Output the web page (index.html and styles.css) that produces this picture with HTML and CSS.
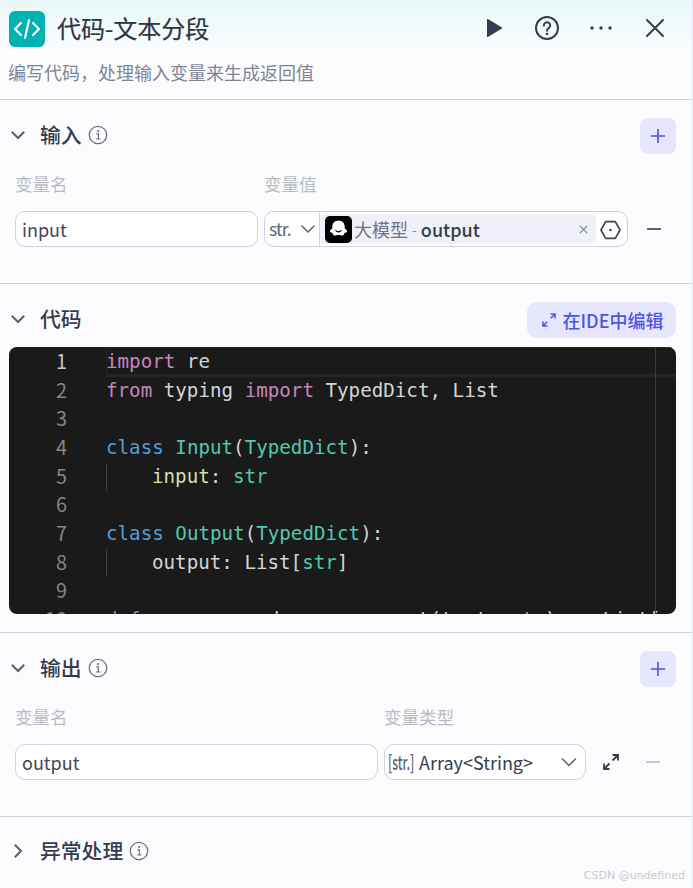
FILE: index.html
```html
<!DOCTYPE html>
<html lang="zh-CN">
<head>
<meta charset="utf-8">
<title>代码-文本分段</title>
<link rel="stylesheet" href="styles.css">
</head>
<body>
<div class="panel">
  <header class="top">
    <div class="top-row">
      <span class="logo">
        <svg viewBox="0 0 36 36" width="36" height="36"><path d="M12 12l-6 6 6 6M24 12l6 6-6 6M20 9l-4 18" fill="none" stroke="#fff" stroke-width="2.2" stroke-linecap="round" stroke-linejoin="round"/></svg>
      </span>
      <h1 class="title">代码-文本分段</h1>
      <div class="top-actions">
        <svg class="top-icon" viewBox="0 0 24 24"><path d="M6 3.5v17a.5.5 0 0 0 .8.4L21 12.400a.5.5 0 0 0 0-.8L6.800 3.100a.5.5 0 0 0-.8.4z" fill="#363c4f"/></svg>
        <svg class="top-icon" viewBox="0 0 24 24"><circle cx="12" cy="12" r="11" fill="none" stroke="#363c4f" stroke-width="2"/><path d="M8.800 9.500a3.200 3.200 0 1 1 4.900 2.700c-1.100.7-1.700 1.300-1.700 2.600" fill="none" stroke="#363c4f" stroke-width="2" stroke-linecap="round"/><circle cx="12" cy="18" r="1.300" fill="#363c4f"/></svg>
        <svg class="top-icon" viewBox="0 0 24 24"><circle cx="3" cy="12" r="1.700" fill="#363c4f"/><circle cx="12" cy="12" r="1.700" fill="#363c4f"/><circle cx="21" cy="12" r="1.700" fill="#363c4f"/></svg>
        <svg class="top-icon" viewBox="0 0 24 24"><path d="M4 4l16 16M20 4L4 20" fill="none" stroke="#363c4f" stroke-width="2" stroke-linecap="round"/></svg>
      </div>
    </div>
    <p class="desc">编写代码，处理输入变量来生成返回值</p>
  </header>

  <section class="section">
    <div class="head">
      <svg class="chev" viewBox="0 0 16 16"><path d="M1.800 4.800L8 11l6.200-6.200" fill="none" stroke="#5a6074" stroke-width="2"/></svg>
      <h2 class="sec-title">输入</h2>
      <svg class="info" viewBox="0 0 20 20"><circle cx="10" cy="10" r="8.700" fill="none" stroke="#6b7085" stroke-width="1.300"/><path d="M8.300 8.800h2.100v5M8 14h4.500" fill="none" stroke="#6b7085" stroke-width="1.200"/><circle cx="10" cy="6" r="1.100" fill="#6b7085"/></svg>
      <button class="add"><svg viewBox="0 0 20 20" width="20" height="20"><path d="M10 3v14M3 10h14" fill="none" stroke="#4d53e8" stroke-width="1.600"/></svg></button>
    </div>
    <div class="grid grid-in labels">
      <span class="label">变量名</span>
      <span class="label">变量值</span>
    </div>
    <div class="grid grid-in controls">
      <div class="field">input</div>
      <div class="field value">
        <div class="type">str.<svg class="chev-sm" viewBox="0 0 16 16"><path d="M1.500 4.500L8 11l6.500-6.500" fill="none" stroke="#5d6275" stroke-width="1.500"/></svg></div>
        <div class="chip">
          <svg class="ghost" viewBox="0 0 27 27"><rect width="27" height="27" rx="5" fill="#000"/><path d="M13.500 4.500c-3.900 0-6.200 2.800-6.200 6.200v1.700c-1.200.6-2.300 1.700-2.300 3.100 0 1.300 1.200 1.300 2.100 1 .8 1.900 1.500 3.100 2.800 3.100 1 0 1.400-.5 3.600-.5s2.600.5 3.600.5c1.300 0 2-1.200 2.800-3.100.9.3 2.100.3 2.100-1 0-1.400-1.100-2.500-2.300-3.100v-1.700c0-3.400-2.300-6.200-6.200-6.200z" fill="#fff"/><path d="M10.800 14.500c1.200 1.800 4.200 1.800 5.400 0" fill="none" stroke="#000" stroke-width="1.100" stroke-linecap="round"/></svg>
          <span class="chip-node">大模型</span><span class="chip-sep">-</span><span class="chip-var">output</span>
          <svg class="chip-x" viewBox="0 0 12 12"><path d="M2 2l8 8M10 2l-8 8" fill="none" stroke="#80859a" stroke-width="1.400"/></svg>
        </div>
        <svg class="hex" viewBox="0 0 22 20"><path d="M6 1.200h10l5 8.800-5 8.800H6L1 10z" fill="none" stroke="#3f4558" stroke-width="1.700" stroke-linejoin="round"/><circle cx="11" cy="10" r="1.400" fill="#3f4558"/></svg>
      </div>
      <svg class="minus" viewBox="0 0 16 16"><path d="M1 8h14" fill="none" stroke="#363c4f" stroke-width="1.600"/></svg>
    </div>
  </section>

  <section class="section section-code">
    <div class="head">
      <svg class="chev" viewBox="0 0 16 16"><path d="M1.800 4.800L8 11l6.200-6.200" fill="none" stroke="#5a6074" stroke-width="2"/></svg>
      <h2 class="sec-title">代码</h2>
      <button class="ide">
        <svg viewBox="0 0 16 16" width="16" height="16"><path d="M9.500 2h4.500v4.500M14 2L9.800 6.200M6.500 14H2V9.500M2 14l4.200-4.200" fill="none" stroke="#4d53e8" stroke-width="1.500"/></svg>
        在IDE中编辑
      </button>
    </div>
    <div class="editor">
      <div class="ruler"></div>
      <div class="line active"><span class="num">1</span><span class="src"><i class="kw">import</i> re</span></div>
      <div class="line"><span class="num">2</span><span class="src"><i class="kw">from</i> typing <i class="kw">import</i> TypedDict, List</span></div>
      <div class="line"><span class="num">3</span><span class="src"></span></div>
      <div class="line"><span class="num">4</span><span class="src"><i class="cl">class</i> <i class="ty">Input</i>(<i class="ty">TypedDict</i>):</span></div>
      <div class="line"><span class="num">5</span><span class="src in"><i class="pr">input</i>: <i class="ty">str</i></span></div>
      <div class="line"><span class="num">6</span><span class="src"></span></div>
      <div class="line"><span class="num">7</span><span class="src"><i class="cl">class</i> <i class="ty">Output</i>(<i class="ty">TypedDict</i>):</span></div>
      <div class="line"><span class="num">8</span><span class="src in">output: List[<i class="ty">str</i>]</span></div>
      <div class="line"><span class="num">9</span><span class="src"></span></div>
      <div class="line"><span class="num">10</span><span class="src"><i class="cl">def</i> <i class="pr">process_and_merge_secret</i>(<i class="pr">text</i>: <i class="ty">str</i>) -&gt; List[</span></div>
    </div>
  </section>

  <section class="section">
    <div class="head">
      <svg class="chev" viewBox="0 0 16 16"><path d="M1.800 4.800L8 11l6.200-6.200" fill="none" stroke="#5a6074" stroke-width="2"/></svg>
      <h2 class="sec-title">输出</h2>
      <svg class="info" viewBox="0 0 20 20"><circle cx="10" cy="10" r="8.700" fill="none" stroke="#6b7085" stroke-width="1.300"/><path d="M8.300 8.800h2.100v5M8 14h4.500" fill="none" stroke="#6b7085" stroke-width="1.200"/><circle cx="10" cy="6" r="1.100" fill="#6b7085"/></svg>
      <button class="add"><svg viewBox="0 0 20 20" width="20" height="20"><path d="M10 3v14M3 10h14" fill="none" stroke="#4d53e8" stroke-width="1.600"/></svg></button>
    </div>
    <div class="grid grid-out labels">
      <span class="label">变量名</span>
      <span class="label">变量类型</span>
    </div>
    <div class="grid grid-out controls">
      <div class="field">output</div>
      <div class="field select">
        <span class="arr-badge">[str.]</span>
        <span class="arr-text">Array&lt;String&gt;</span>
        <svg class="chev-md" viewBox="0 0 16 16"><path d="M1 4.500L8 11.500l7-7" fill="none" stroke="#5d6275" stroke-width="1.500"/></svg>
      </div>
      <div class="row-actions">
        <svg class="expand" viewBox="0 0 18 18"><path d="M10.500 2H16v5.500M16 2l-5.500 5.500M7.500 16H2v-5.500M2 16l5.500-5.500" fill="none" stroke="#363c4f" stroke-width="1.800"/></svg>
        <svg class="minus faded" viewBox="0 0 16 16"><path d="M1 8h14" fill="none" stroke="#b9bcc8" stroke-width="1.600"/></svg>
      </div>
    </div>
  </section>

  <section class="section section-last">
    <div class="head">
      <svg class="chev" viewBox="0 0 16 16"><path d="M4.800 1.800L11 8l-6.200 6.200" fill="none" stroke="#5a6074" stroke-width="2"/></svg>
      <h2 class="sec-title">异常处理</h2>
      <svg class="info" viewBox="0 0 20 20"><circle cx="10" cy="10" r="8.700" fill="none" stroke="#6b7085" stroke-width="1.300"/><path d="M8.300 8.800h2.100v5M8 14h4.500" fill="none" stroke="#6b7085" stroke-width="1.200"/><circle cx="10" cy="6" r="1.100" fill="#6b7085"/></svg>
    </div>
    <span class="mark">CSDN @undefined</span>
  </section>
</div>
</body>
</html>
```

FILE: styles.css
```css
* { box-sizing: border-box; }
html, body { margin: 0; padding: 0; }
body {
  font-family: "Noto Sans CJK SC", "Noto Sans", sans-serif;
  background: #fcfcff;
  color: #363c4f;
}
.panel {
  width: 693px;
  height: 888px;
  overflow: hidden;
  border-right: 1px solid #e6e8f2;
  background: #fcfcff;
}
.top {
  height: 100px;
  border-bottom: 1px solid #d3d3de;
  background: linear-gradient(180deg, #e7f9f7 0, #fcfcff 50px);
  padding: 11px 0 0 9px;
}
.top-row { display: flex; align-items: center; height: 36px; }
.logo {
  width: 36px; height: 36px; border-radius: 6px;
  background: #00b2b2; display: flex;
}
.title { margin: 0 0 2px 12px; font-size: 24px; font-weight: 400; line-height: 34px; color: #2f3445; -webkit-text-stroke: .2px #2f3445; }
.top-actions { margin: 0 0 2px auto; display: flex; gap: 30px; padding-right: 25px; align-items: center; }
.top-icon { width: 24px; height: 24px; display: block; }
.desc { margin: 7px 0 0 -1px; font-size: 18px; line-height: 36px; color: #7f8494; }
.section {
  height: 184px;
  border-bottom: 1px solid #d3d3de;
  padding: 18px 16px 0 15px;
}
.section-code { height: 349px; padding-left: 9px; }
.section-last { height: 71px; border-bottom: none; position: relative; padding-top: 17px; }
.head { display: flex; align-items: center; height: 36px; }
.chev { width: 16px; height: 16px; margin: 0 0 2px -5px; flex: none; }
.section-code .chev { margin-left: 1px; }
.sec-title { margin: 0 0 3px 14px; font-size: 20.800px; font-weight: 500; line-height: 33px; color: #363c4f; }
.info { width: 20px; height: 20px; margin: 0 0 2px 6px; }
.add {
  margin-left: auto; width: 36px; height: 36px; border: 0; padding: 0;
  border-radius: 8px; background: #e6e7ff; display: flex; align-items: center; justify-content: center;
}
.ide {
  margin-left: auto; height: 36px; width: 149px; border: 0; padding: 0 0 0 1px;
  border-radius: 10px; background: #e6e7ff; color: #4d53e8;
  font: 500 18px/36px "Noto Sans CJK SC", sans-serif;
  display: flex; align-items: center; justify-content: center; gap: 6px;
}
.grid { display: grid; column-gap: 6px; }
.grid-in { grid-template-columns: 243px 364px 1fr; }
.grid-out { grid-template-columns: 363px 202px 1fr; }
.labels { margin-top: 18px; height: 24px; }
.label { font-size: 17.500px; line-height: 24px; color: #b9bbc3; }
.controls { margin-top: 15px; height: 36px; align-items: center; }
.field {
  height: 36px; border: 1px solid #cfd0e2; border-radius: 10px; background: #fff;
  font-size: 18px; line-height: 34px; padding-left: 6px; color: #41475a;
}
.value { display: flex; align-items: center; padding: 0; }
.type {
  width: 55px; height: 34px; flex: none; display: flex; align-items: center; gap: 9px;
  padding-left: 4px; border-right: 1px solid #cfd0e2; color: #5d6275; font-size: 17.500px; letter-spacing: -.8px;
}
.chev-sm { width: 16px; height: 16px; }
.chip {
  margin-left: 0; width: 276px; height: 30px; flex: none; border-radius: 5px; background: #f0f0f8;
  display: flex; align-items: center; padding-left: 5px; font-size: 18px;
}
.ghost { width: 27px; height: 27px; flex: none; margin-right: 2px; }
.chip-node { color: #6f7385; }
.chip-sep { color: #8a8e9d; margin: 0 4px; font-size: 14px; }
.chip-var { color: #363c4f; font-weight: 500; }
.chip-x { width: 11px; height: 11px; margin-left: auto; margin-right: 7px; }
.hex { width: 21px; height: 20px; margin: 1px 0 0 4px; }
.minus { width: 16px; height: 16px; justify-self: start; margin-left: 12px; }
.row-actions { display: flex; align-items: center; gap: 25px; padding-left: 10px; }
.row-actions .minus { margin-left: 0; }
.expand { width: 18px; height: 18px; }
.select { display: flex; align-items: center; padding-left: 3px; }
.arr-badge {
  font-size: 20px; font-weight: 500; color: #5d6275; width: 31px; flex: none;
  transform: scaleX(.6); transform-origin: left center; line-height: 30px; white-space: nowrap;
}
.arr-text { font-size: 18px; color: #363c4f; }
.chev-md { width: 16px; height: 16px; margin-left: auto; margin-right: 8px; }
.editor {
  position: relative; margin-top: 9px; height: 267px; overflow: hidden;
  border-radius: 8px; background: #1a1a1a; padding-top: 1px;
  font-family: "DejaVu Sans Mono", monospace; font-size: 19.200px; color: #d4d4d4;
}
.ruler { position: absolute; top: 0; bottom: 0; left: 646px; width: 1px; background: #3c3c3c; }
.line { display: flex; height: 28.670px; line-height: 28.670px; }
.num { width: 58px; text-align: right; color: #858585; font-family: "Noto Sans CJK SC", sans-serif; flex: none; line-height: 26.500px; font-size: 19.800px; }
.active .num { color: #c6c6c6; }
.src { margin-left: 39px; flex: 1; white-space: pre; }
.active .src { box-shadow: inset 1px 0 #252525, inset 0 -3px #252525, 0 -1px #252525; }
.in { padding-left: 45px; border-left: 1px solid #404040; }
i { font-style: normal; }
.kw { color: #c586c0; }
.cl { color: #569cd6; }
.ty { color: #4ec9b0; }
.pr { color: #dcdcaa; }
.mark {
  position: absolute; right: 7px; bottom: 5px; font-family: "DejaVu Sans", sans-serif;
  font-size: 11px; color: #c9cad0; line-height: 14px;
}
```
